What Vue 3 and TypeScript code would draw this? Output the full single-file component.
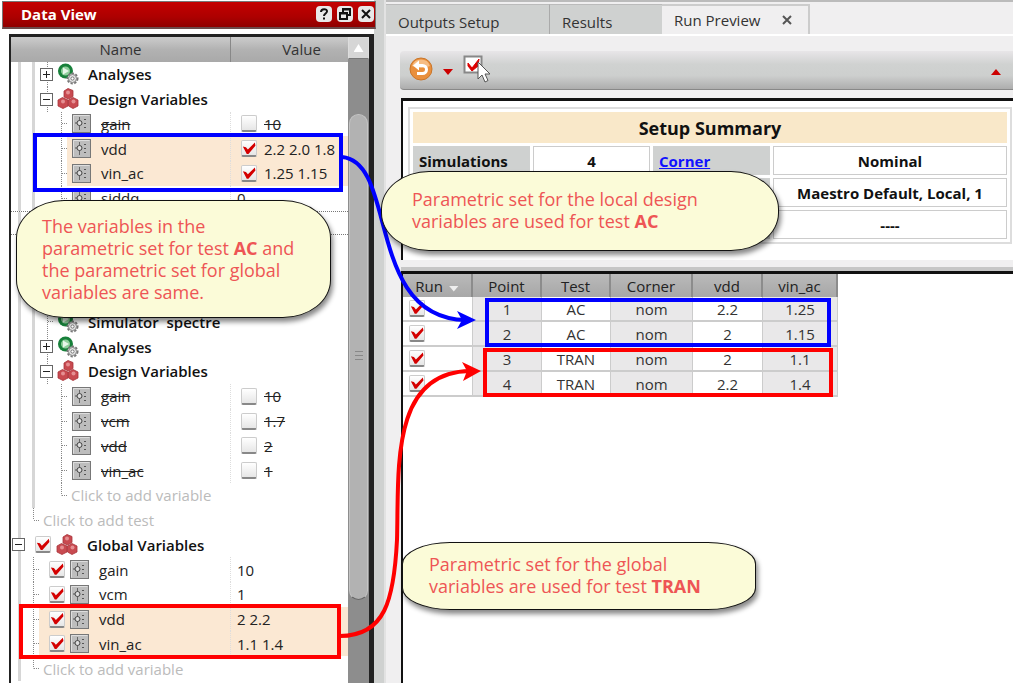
<script setup lang="ts">
import { ref } from 'vue'

type Guide = 'rail' | 'line' | 'tee' | 'end' | 'none' | 'plus' | 'minus'
type Icon = 'gears' | 'balls' | 'slider'

interface TreeRow {
  guides: Guide[]
  kind: 'group' | 'global' | 'variable' | 'globalVar' | 'hint' | 'blank'
  icon?: Icon
  label?: string
  value?: string
  nameCheck?: boolean
  valueCheck?: boolean
  off?: boolean
  marked?: boolean
  focused?: boolean
}

const leaf: Guide[] = ['rail', 'rail', 'none', 'tee']

const group = (icon: Icon, label: string, mark: Guide): TreeRow => ({
  guides: ['rail', 'rail', mark], kind: 'group', icon, label,
})
const localVar = (label: string, value: string, on: boolean): TreeRow => ({
  guides: leaf, kind: 'variable', icon: 'slider', label, value, valueCheck: on, off: !on, marked: on,
})
const globalVar = (label: string, value: string, marked = false): TreeRow => ({
  guides: ['rail', 'tee'], kind: 'globalVar', icon: 'slider', label, value, nameCheck: true, marked,
})
const blank = (focused = false): TreeRow => ({ guides: ['rail', 'rail'], kind: 'blank', focused })

const rows = ref<TreeRow[]>([
  group('gears', 'Analyses', 'plus'),
  group('balls', 'Design Variables', 'minus'),
  localVar('gain', '10', false),
  localVar('vdd', '2.2 2.0 1.8', true),
  localVar('vin_ac', '1.25 1.15', true),
  { guides: leaf, kind: 'variable', icon: 'slider', label: 'siddq', value: '0' },
  blank(true),
  blank(),
  blank(),
  blank(),
  group('gears', 'Simulator  spectre', 'tee'),
  group('gears', 'Analyses', 'plus'),
  group('balls', 'Design Variables', 'minus'),
  localVar('gain', '10', false),
  localVar('vcm', '1.7', false),
  localVar('vdd', '2', false),
  localVar('vin_ac', '1', false),
  { guides: ['rail', 'rail', 'none', 'end'], kind: 'hint', label: 'Click to add variable' },
  { guides: ['rail', 'end'], kind: 'hint', label: 'Click to add test' },
  { guides: ['minus'], kind: 'global', icon: 'balls', label: 'Global Variables', nameCheck: true },
  globalVar('gain', '10'),
  globalVar('vcm', '1'),
  globalVar('vdd', '2 2.2', true),
  globalVar('vin_ac', '1.1 1.4', true),
  { guides: ['rail', 'end'], kind: 'hint', label: 'Click to add variable' },
])

const runs = ref([
  { run: true, point: '1', test: 'AC', corner: 'nom', vdd: '2.2', vin: '1.25' },
  { run: true, point: '2', test: 'AC', corner: 'nom', vdd: '2', vin: '1.15' },
  { run: true, point: '3', test: 'TRAN', corner: 'nom', vdd: '2', vin: '1.1' },
  { run: true, point: '4', test: 'TRAN', corner: 'nom', vdd: '2.2', vin: '1.4' },
])
</script>

<template>
  <div class="screen">
    <svg class="defs" aria-hidden="true">
      <symbol id="gears" viewBox="0 0 22 22">
        <circle cx="8.500" cy="8" r="7.500" fill="#17803a" />
        <circle cx="8.500" cy="8" r="4.500" fill="#8fcf9c" />
        <path d="M6 4.500l6 3.500-6 3.500z" fill="#e8f6ea" />
        <circle cx="15.500" cy="15.500" r="5" fill="#ddd" stroke="#777" stroke-width="2" stroke-dasharray="2.200 1.500" />
        <circle cx="15.500" cy="15.500" r="4" fill="#e4e4e4" stroke="#888" />
        <circle cx="15.500" cy="15.500" r="1.600" fill="#fff" stroke="#777" />
      </symbol>
      <symbol id="balls" viewBox="0 0 22 22">
        <g fill="#c84a50" stroke="#a8343a" stroke-width=".8">
          <path d="M7 3l4-2.500 5 2v6l-4.500 2.500L7 9z" />
          <path d="M1 12l4.500-2.500L11 12v6l-5 2.500L1 18z" />
          <path d="M11.500 12l4.500-2.500 5 2.500v6l-5 2.500-4.500-2.500z" />
        </g>
        <g fill="#e58f92">
          <circle cx="11" cy="4.500" r="2" /><circle cx="6" cy="13.500" r="2" /><circle cx="16.500" cy="13.500" r="2" />
        </g>
      </symbol>
      <symbol id="slider" viewBox="0 0 19 19">
        <rect x=".5" y=".5" width="18" height="18" fill="#bdbdbd" stroke="#777" />
        <path d="M1.500 17.500V1.500h16" fill="none" stroke="#dedede" />
        <path d="M7.500 3v13" stroke="#666" />
        <circle cx="7.500" cy="9" r="2.500" fill="#ddd" stroke="#444" />
        <path d="M3 9h2M12 5.500h3M12 9.500h3M12 13.500h3" stroke="#555" stroke-dasharray="2 1" />
      </symbol>
    </svg>

    <aside class="dock">
      <header class="dock-title">
        <h1>Data View</h1>
        <button type="button" aria-label="Help">
          <svg viewBox="0 0 16 16"><path d="M5 6c0-4 6.500-3.500 6-.5C10.800 7.500 8 7.500 8 10M8 11.500v2" /></svg>
        </button>
        <button type="button" aria-label="Float">
          <svg viewBox="0 0 16 16"><path d="M6 6V3h7v6h-3M3 7h7v6H3zM6 3.500h7M3 7.500h7" /></svg>
        </button>
        <button type="button" aria-label="Close">
          <svg viewBox="0 0 16 16"><path d="M4 4l8 8M12 4l-8 8" /></svg>
        </button>
      </header>

      <div class="tree-frame">
        <table class="tree">
          <thead>
            <tr><th>Name</th><th>Value</th></tr>
          </thead>
          <tbody>
            <tr v-for="(row, i) in rows" :key="i" :class="[row.kind, { marked: row.marked, focused: row.focused }]">
              <td class="name">
                <template v-for="(g, n) in row.guides" :key="n">
                  <span v-if="g !== 'plus' && g !== 'minus'" class="guide" :class="g"></span>
                  <span v-else class="guide" :class="n ? 'line' : 'rail'">
                    <button type="button" class="expander" :class="g" :aria-label="`Toggle ${row.label}`"></button>
                  </span>
                </template>
                <input v-if="row.nameCheck !== undefined" v-model="row.nameCheck" type="checkbox" class="tick" :aria-label="row.label" />
                <svg v-if="row.icon" class="icon" :class="row.icon"><use :href="`#${row.icon}`" /></svg>
                <span v-if="row.label" class="label" :class="{ off: row.off }">{{ row.label }}</span>
              </td>
              <td class="value">
                <input v-if="row.valueCheck !== undefined" v-model="row.valueCheck" type="checkbox" class="tick" :aria-label="`Use ${row.label}`" />
                <span v-if="row.value" :class="{ off: row.off }">{{ row.value }}</span>
              </td>
            </tr>
          </tbody>
        </table>
        <div class="scrollbar">
          <button type="button" aria-label="Scroll up"></button>
          <div class="track"><div class="thumb"></div></div>
        </div>
      </div>
    </aside>

    <main class="main">
      <nav class="tabs">
        <button type="button" class="tab outputs">Outputs Setup</button>
        <button type="button" class="tab results">Results</button>
        <div class="tab active">
          <button type="button">Run Preview</button>
          <button type="button" aria-label="Close tab">
            <svg viewBox="0 0 12 12"><path d="M2 2l8 8M10 2l-8 8" /></svg>
          </button>
        </div>
      </nav>

      <div class="toolbar">
        <button type="button" aria-label="Refresh preview">
          <svg width="24" height="24" viewBox="0 0 24 24">
            <circle cx="12" cy="12" r="11" fill="#e98f3c" stroke="#c9762b" />
            <path d="M3 9a9.500 9.500 0 0 1 18 0q-9 4-18 0z" fill="#f6bd84" />
            <path d="M8 8.500h5.500a4 4 0 0 1 0 8H8" fill="none" stroke="#fff" stroke-width="3" />
            <path d="M4 8.500l6-5v10z" fill="#fff" />
          </svg>
        </button>
        <button type="button" aria-label="Refresh options"><i class="caret down"></i></button>
        <button type="button" aria-label="Select runs">
          <svg width="28" height="28" viewBox="0 0 28 28">
            <rect x="1.500" y="1.500" width="17" height="16" fill="#fff" stroke="#888" stroke-width="2" />
            <path d="M5 8l4 5 7-9-1 7-6 5-4-5z" fill="#d00" stroke="#d00" stroke-width="1" />
            <path d="M15 7v17l4-4 3 7 3-1.500-3-6.500h5z" fill="#fff" stroke="#555" />
          </svg>
        </button>
        <button type="button" class="last" aria-label="Collapse toolbar"><i class="caret up"></i></button>
      </div>

      <section class="summary">
        <table>
          <colgroup><col class="fifth" /><col class="fifth" /><col class="fifth" /><col /></colgroup>
          <tbody>
            <tr class="heading"><th colspan="4">Setup Summary</th></tr>
            <tr><th>Simulations</th><td>4</td><th><a href="#corner">Corner</a></th><td>Nominal</td></tr>
            <tr><th></th><td></td><th></th><td>Maestro Default, Local, 1</td></tr>
            <tr><th></th><td></td><th></th><td>----</td></tr>
          </tbody>
        </table>
      </section>

      <section class="preview">
        <table>
          <thead>
            <tr>
              <th class="run">Run <i class="caret sort"></i></th>
              <th class="point">Point</th>
              <th class="test">Test</th>
              <th class="corner">Corner</th>
              <th class="vdd">vdd</th>
              <th class="vin">vin_ac</th>
            </tr>
          </thead>
          <tbody>
            <tr v-for="r in runs" :key="r.point">
              <td class="run"><input v-model="r.run" type="checkbox" class="tick" :aria-label="`Run point ${r.point}`" /></td>
              <td class="shade">{{ r.point }}</td>
              <td>{{ r.test }}</td>
              <td class="shade">{{ r.corner }}</td>
              <td>{{ r.vdd }}</td>
              <td class="shade">{{ r.vin }}</td>
            </tr>
          </tbody>
        </table>
      </section>
    </main>

    <div class="frame blue local-set"></div>
    <div class="frame red global-set"></div>
    <div class="frame blue ac-runs"></div>
    <div class="frame red tran-runs"></div>

    <svg class="links" viewBox="0 0 1013 683" aria-hidden="true">
      <g fill="none" stroke-width="4">
        <path d="M342 157C398 162 365 318 466 320" stroke="#00f" />
        <path d="M340 636C385 636 394 600 397 540C399 470 390 372 470 371" stroke="#f00" />
      </g>
      <path d="M476 320l-19-9 5 9-5 9z" fill="#00f" />
      <path d="M481 371l-19-9 5 9-4 10z" fill="#f00" />
    </svg>

    <p class="note note-same">The variables in the<br />parametric set for test <b>AC</b> and<br />the parametric set for global<br />variables are same.</p>
    <p class="note note-ac">Parametric set for the local design<br />variables are used for test <b>AC</b></p>
    <p class="note note-tran">Parametric set for the global<br />variables are used for test <b>TRAN</b></p>
  </div>
</template>

<style>
body { margin: 0; background: #fff; }
</style>

<style scoped>
* { box-sizing: border-box; }
.screen {
  position: relative;
  display: grid;
  grid-template-columns: 386px minmax(0, 1fr);
  min-height: 100vh;
  overflow: hidden;
  background: #f0eff0;
  color: #222;
  font: 15px/20px "Open Sans", "Noto Sans", sans-serif;
}
.defs { position: absolute; width: 0; height: 0; }
button { padding: 0; border: 0; background: none; font: inherit; color: inherit; }
table { border-spacing: 0; }
th, td { padding: 0; font-weight: 400; }

.tick {
  appearance: none;
  display: block;
  flex: none;
  width: 16px;
  height: 17px;
  margin: 0;
  border: 1px solid #ccc;
  border-bottom: 2px solid #888;
  border-radius: 2px;
  background: linear-gradient(#fff, #e6e6e6);
}
.tick:checked::before {
  content: "";
  display: block;
  width: 14px;
  height: 12px;
  margin-top: 1px;
  background: #d40000;
  clip-path: polygon(6% 36%, 28% 42%, 42% 62%, 92% 4%, 96% 30%, 46% 98%, 34% 98%);
}

/* left dock */
.dock {
  display: flex;
  flex-direction: column;
  padding: 1px 0 0 2px;
  border-right: 2px solid #e2e2e2;
  background: linear-gradient(to right, #fff 374px, #cfd1d0 374px);
}
.dock-title {
  display: flex;
  align-items: center;
  gap: 5px;
  width: 374px;
  height: 28px;
  padding: 0 1px 2px 18px;
  border: 1px solid #777;
  border-bottom: 2px solid #6b4a4a;
  background: linear-gradient(#c40000, #ad0000 60%, #8f0000);
}
.dock-title h1 { flex: 1; margin: 0; font-size: 15px; font-weight: 700; color: #fff; }
.dock-title button { width: 16px; height: 16px; border-radius: 4px; background: #e8e8e8; }
.dock-title svg { display: block; fill: none; stroke: #111; stroke-width: 2; }

.tree-frame {
  flex: 1;
  display: flex;
  width: 365px;
  margin: 5px 0 0 7px;
  border: solid #222;
  border-width: 3px 5px 0 2px;
  background: #fff;
}
.tree { flex: 1; display: flex; flex-direction: column; }
.tree thead, .tree tbody { display: grid; }
.tree tbody { flex: 1; grid-auto-rows: minmax(20px, 1fr); padding-bottom: 2px; }
.tree tr { display: grid; grid-template-columns: 219px minmax(0, 1fr); }
.tree thead tr { height: 25px; background: linear-gradient(#ccc, #b2b2b2 50%, #a9a9a9); }
.tree th { text-align: center; line-height: 25px; color: #333; }
.tree th + th { border-left: 1px solid #888; padding-left: 24px; }
.tree td { display: flex; align-items: center; min-width: 0; white-space: pre; }
.name { padding-left: 1px; }
.value { padding-left: 6px; }
.variable .value, .globalVar .value { border-left: 1px dotted #ddd; }
.value .tick { margin: 0 7px 0 4px; }
.variable.marked { background: linear-gradient(to right, transparent 56px, #fbe8d3 56px); }
.globalVar.marked { background: linear-gradient(to right, transparent 28px, #fbe8d3 28px); }
.focused { border: dotted #777; border-width: 1px 0; }

.guide { flex: none; position: relative; display: flex; align-items: center; width: 14px; height: 100%; }
.rail { background: linear-gradient(to right, transparent 6px, #d6d6d6 6px, #d6d6d6 9px, transparent 9px); }
.line, .tee { background: repeating-linear-gradient(#888 0 1px, #fff 1px 2px) 7px 0 / 1px 100% no-repeat; }
.end { background: repeating-linear-gradient(#888 0 1px, #fff 1px 2px) 7px 0 / 1px 50% no-repeat; }
.tee::after, .end::after { content: ""; width: 5px; margin-left: 8px; border-top: 1px dotted #888; }
.expander { width: 13px; height: 13px; border: 1px solid #666; background: linear-gradient(#222, #222) center / 7px 1px no-repeat #fff; }
.expander.plus {
  background: linear-gradient(#222, #222) center / 7px 1px no-repeat, linear-gradient(#222, #222) center / 1px 7px no-repeat, #fff;
}
.icon { flex: none; width: 22px; height: 22px; margin: 0 9px 0 3px; }
.icon.slider { width: 19px; height: 19px; margin: 0 10px 0 4px; }
.name .tick { margin-left: 9px; }
.name .tick + .icon { margin-left: 5px; }
.group .label, .global .label { font-weight: 600; color: #111; }
.hint .label { margin-left: 3px; color: #bbb; }
.off { text-decoration: line-through; }

.scrollbar { display: flex; flex-direction: column; width: 21px; }
.scrollbar button { height: 22px; border: 1px solid #ddd; border-bottom-color: #777; background: #d6d6d6; }
.scrollbar button::before {
  content: "";
  display: block;
  width: 10px;
  height: 8px;
  margin: auto;
  background: #fff;
  clip-path: polygon(50% 0, 100% 100%, 0 100%);
}
.track { flex: 1; display: flex; padding: 55px 1px 83px; background: #8d8d8d; }
.thumb {
  flex: 1;
  border: 1px solid #c4c4c4;
  border-bottom-color: #666;
  border-radius: 10px;
  background: repeating-linear-gradient(#888 0 1px, transparent 1px 4px) center / 8px 12px no-repeat #b2b2b2;
}

/* right side */
.main { display: flex; flex-direction: column; border-top: 2px solid #bbb; }
.tabs { display: flex; height: 34px; padding-top: 2px; border-bottom: 2px solid #fff; color: #333; }
.tab { height: 30px; padding: 4px 0 0 12px; border-top: 1px solid #bbb; background: #cfd1d0; text-align: left; }
.tab.outputs { width: 163px; }
.tab.results { width: 113px; border-left: 1px solid #aaa; }
.tab.active { display: flex; align-items: center; gap: 21px; width: 148px; padding-top: 0; border: 2px solid #ccc; border-width: 2px 2px 0 0; background: #f0eff0; }
.tab svg { display: block; width: 12px; height: 12px; stroke: #555; stroke-width: 2; }
.toolbar {
  display: flex;
  align-items: center;
  gap: 10px;
  height: 39px;
  margin: 15px 0 8px 14px;
  padding: 0 12px 2px 9px;
  border-bottom: 1px solid #888;
  border-radius: 4px 0 0 4px;
  background: linear-gradient(#e8e6e8, #d0d2d1 35%, #cdcfce 65%, #adadad);
}
.toolbar svg { display: block; }
.toolbar .last { margin-left: auto; }
.caret { display: inline-block; width: 10px; height: 6px; background: #c00; }
.down, .sort { clip-path: polygon(0 0, 100% 0, 50% 100%); }
.up { clip-path: polygon(50% 0, 100% 100%, 0 100%); }
.sort { margin-left: 2px; background: #eee; }

.summary {
  height: 162px;
  margin-left: 15px;
  padding: 6px 1px 0 5px;
  border: solid #111;
  border-width: 3px 0 0 2px;
  background: #fff;
  font-weight: 700;
  color: #111;
}
.summary table {
  width: 100%;
  table-layout: fixed;
  border: 2px solid #ddd;
  border-spacing: 3px;
}
.fifth { width: 20%; }
.summary th, .summary td { height: 29px; font-weight: 700; line-height: 24px; }
.summary th { padding-left: 6px; background: #cfd1d0; text-align: left; }
.summary td { border: 1px solid #ccc; text-align: center; }
.summary .heading th { height: 31px; padding: 0; background: #f9e8c9; font-size: 18px; text-align: center; }
.summary a { color: #11f; text-decoration: underline; }

.preview {
  flex: 1;
  margin: 11px 0 0 15px;
  border: solid #111;
  border-width: 3px 0 0 2px;
  box-shadow: 0 -4px #c6c6c6;
  background: #fff;
}
.preview table { table-layout: fixed; width: 435px; text-align: center; }
.preview th { height: 23px; border-right: 2px solid #8c8c8c; background: linear-gradient(#bbb, #b0b0b0 50%, #a8a8a8); line-height: 22px; }
.preview td { height: 25px; border: solid #ccc; border-width: 0 1px 2px 0; line-height: 22px; color: #333; }
.preview .shade { background: #e9e8e9; }
.preview .run { width: 70px; }
.preview td.run { padding-left: 6px; }
.preview .point, .preview .test { width: 69px; }
.preview .corner { width: 82px; }
.preview .vdd { width: 70px; }
.preview .vin { width: 75px; }

/* annotations lying over the window */
.frame { position: absolute; border: 4px solid; }
.blue { border-color: #00f; }
.red { border-color: #f00; }
.local-set { left: 33px; top: 133px; width: 310px; height: 59px; }
.global-set { left: 19px; top: 604px; width: 322px; height: 55px; }
.ac-runs { left: 485px; top: 298px; width: 346px; height: 49px; }
.tran-runs { left: 483px; top: 348px; width: 350px; height: 49px; }
.links { position: absolute; left: 0; top: 0; width: 1013px; height: 683px; pointer-events: none; }
.note {
  position: absolute;
  margin: 0;
  border: 1px solid #111;
  border-radius: 48px / 38px;
  background: #fbfbd8;
  box-shadow: 2px 4px 5px #0007;
  color: #ee5555;
  font-size: 18px;
  line-height: 22px;
  white-space: nowrap;
}
.note-same { left: 16px; top: 200px; width: 315px; height: 118px; padding: 14px 0 0 25px; }
.note-ac { left: 381px; top: 171px; width: 398px; height: 80px; padding: 16px 0 0 30px; }
.note-tran { left: 402px; top: 542px; width: 354px; height: 68px; padding: 10px 0 0 26px; border-radius: 48px / 22px; }
</style>
